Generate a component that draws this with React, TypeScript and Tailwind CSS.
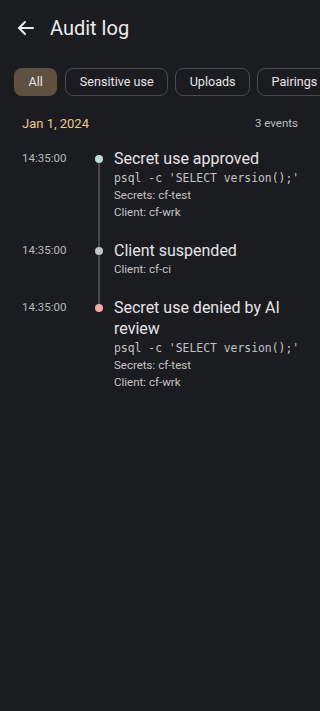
const chips = ["All", "Sensitive use", "Uploads", "Pairings"];

interface AuditEvent {
  time: string;
  title: string;
  dot: string;
  command?: string;
  secrets?: string;
  client: string;
}

const events: AuditEvent[] = [
  {
    time: "14:35:00",
    title: "Secret use approved",
    dot: "bg-[#b4e0cf]",
    command: "psql -c 'SELECT version();'",
    secrets: "cf-test",
    client: "cf-wrk",
  },
  { time: "14:35:00", title: "Client suspended", dot: "bg-[#c4c4c6]", client: "cf-ci" },
  {
    time: "14:35:00",
    title: "Secret use denied by AI review",
    dot: "bg-[#f3aaa2]",
    command: "psql -c 'SELECT version();'",
    secrets: "cf-test",
    client: "cf-wrk",
  },
];

function EventRow({ ev, first, last }: { ev: AuditEvent; first: boolean; last: boolean }) {
  return (
    <div className="flex">
      <div className="w-[94px] shrink-0 pl-[22px] text-[11.5px] leading-[21px] text-[#b9b9bc]">{ev.time}</div>
      <div className="flex w-[9px] shrink-0 flex-col items-center">
        <div className={`h-[7px] w-[2px] ${first ? "" : "bg-[#4a4a4d]"}`} />
        <div className={`h-[8px] w-[8px] rounded-full ${ev.dot}`} />
        <div className={`w-[2px] flex-1 ${last ? "" : "bg-[#4a4a4d]"}`} />
      </div>
      <div className="min-w-0 flex-1 pb-[19px] pl-[11px] pr-[12px]">
        <div className="text-[16px] leading-[21px] text-[#e6e4e8]">{ev.title}</div>
        {ev.command && (
          <div className="whitespace-nowrap font-['DejaVu_Sans_Mono',monospace] text-[11.4px] leading-[18px] text-[#c4c4c6]">
            {ev.command}
          </div>
        )}
        {ev.secrets && <div className="text-[11.5px] leading-[17px] text-[#c4c4c6]">Secrets: {ev.secrets}</div>}
        <div className="text-[11.5px] leading-[17px] text-[#c4c4c6]">Client: {ev.client}</div>
      </div>
    </div>
  );
}

export default function App() {
  return (
    <div className="min-h-screen w-[320px] overflow-hidden bg-[#1b1c1f] font-['Roboto',sans-serif]">
      <div className="flex h-[56px] items-center pl-[17px]">
        <svg width="17" height="16" viewBox="0 0 17 16" fill="none" stroke="#ececee" strokeWidth="2" strokeLinecap="round">
          <path d="M16 8H2M8 2L2 8l6 6" />
        </svg>
        <span className="ml-[16px] text-[20px] text-[#ececee]">Audit log</span>
      </div>

      <div className="mt-[12px] flex gap-[7px] pl-[14px]">
        {chips.map((c, i) => (
          <div
            key={c}
            className={`flex h-[28px] shrink-0 items-center whitespace-nowrap rounded-[8px] text-[12.6px] text-[#e6e4e8] ${
              i === 0 ? "mr-[1px] bg-[#5e5140] px-[14.5px]" : "border border-[#4a4a4d] px-[13.5px]"
            }`}
          >
            {c}
          </div>
        ))}
      </div>

      <div className="mt-[18px] flex items-center justify-between pl-[22px] pr-[22px]">
        <span className="text-[13px] text-[#ecc98a]">Jan 1, 2024</span>
        <span className="text-[11.5px] text-[#bdbdc0]">3 events</span>
      </div>

      <div className="mt-[14px]">
        {events.map((ev, i) => (
          <EventRow key={i} ev={ev} first={i === 0} last={i === events.length - 1} />
        ))}
      </div>
    </div>
  );
}
